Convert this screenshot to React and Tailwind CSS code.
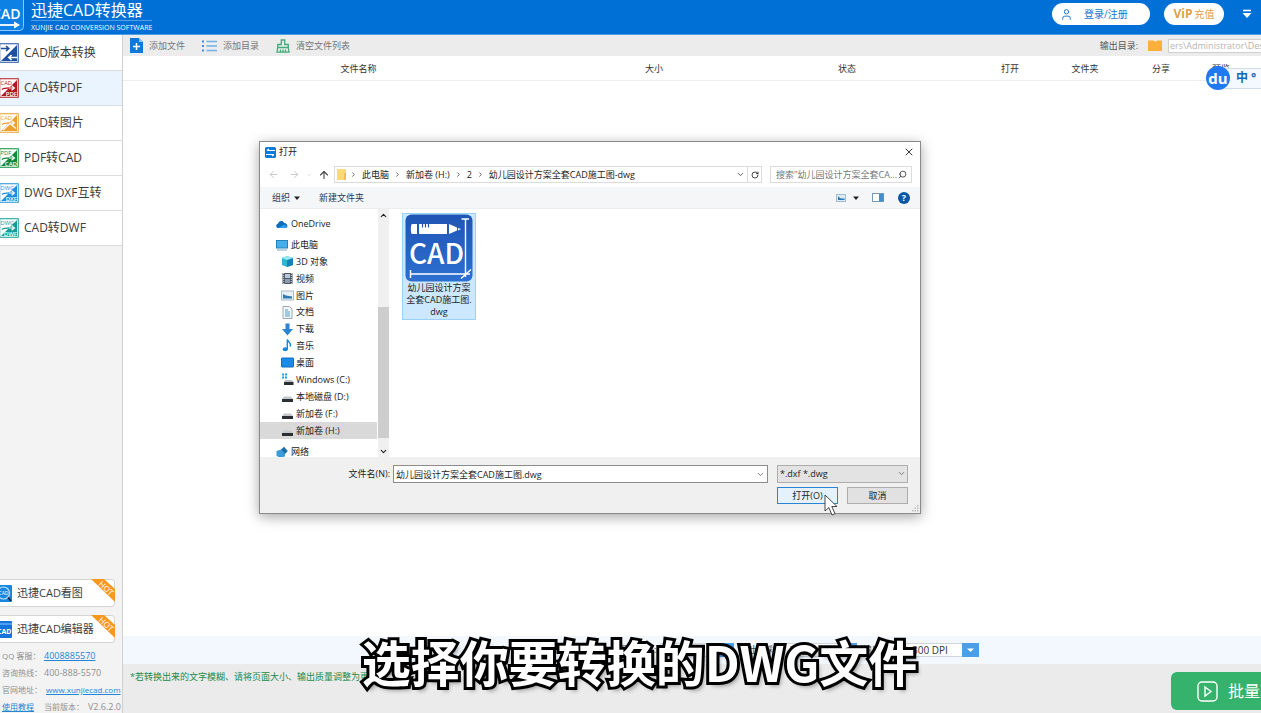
import React from "react";
import { ArrowLeft, ArrowRight, ArrowUp, ChevronDown, ChevronUp, ChevronRight, RotateCw, Search, X, User } from "lucide-react";

const NAV = [
  { label: "CAD版本转换", color: "#1e4f9e", top: "", bottom: "", swap: true },
  { label: "CAD转PDF", color: "#b3161c", top: "CAD", bottom: "PDF", active: true },
  { label: "CAD转图片", color: "#eba02f", top: "CAD", bottom: "" },
  { label: "PDF转CAD", color: "#0f8a3c", top: "PDF", bottom: "CAD" },
  { label: "DWG DXF互转", color: "#1f8fdc", top: "DWG", bottom: "DXF" },
  { label: "CAD转DWF", color: "#159a94", top: "DWG", bottom: "DWF" },
];

function ConvertIcon({ color, top, bottom, swap }) {
  return (
    <svg className="-ml-px h-5 w-5 shrink-0" viewBox="0 0 20 20" aria-hidden="true">
      <rect x="0.75" y="0.75" width="18.5" height="18.5" fill="#fff" stroke={color} strokeWidth="1" />
      <path d="M18 2 V18 H2 Z" fill={color} />
      {swap ? (
        <g fill="none" strokeWidth="1.6">
          <path d="M2 5.5 H9.5 M7 3 L9.8 5.5 L7 8" stroke={color} />
          <path d="M18 14.5 H10 M12.6 12 L9.8 14.5 L12.6 17" stroke="#fff" />
        </g>
      ) : (
        <g>
          <text x="1.5" y="7" fontSize="5.8" fill={color}>{top}</text>
          <path d="M3 11.500 C5 9.600 8 9.800 11.500 9.800" fill="none" stroke={color} strokeWidth="1.3" />
          <path d="M10 10 H15 M12.6 7.600 L15.400 10 L12.6 12.200" fill="none" stroke="#fff" strokeWidth="1.2" />
          {bottom ? (
            <text x="18" y="17.600" textAnchor="end" fontSize="6" fontWeight="600" fill="#fff">{bottom}</text>
          ) : (
            <path d="M4 17 L11 10.5 L17 15.5" fill="none" stroke="#fff" strokeWidth="1.2" />
          )}
        </g>
      )}
    </svg>
  );
}

function HotRibbon() {
  return (
    <svg className="absolute -right-px -top-px h-6 w-6" viewBox="0 0 24 24" aria-hidden="true">
      <path d="M0 0 H13 L24 10 V23 Z" fill="#f8981d" />
      <text x="14.5" y="12" transform="rotate(43 14.5 10)" textAnchor="middle" fontSize="8" fill="#fff">HOT</text>
    </svg>
  );
}

function Sidebar() {
  return (
    <aside className="flex w-[123px] shrink-0 flex-col overflow-hidden border-r border-[#cfcfcf] bg-[#f3f3f3] text-[#3c3c3c]">
      <nav className="bg-white pt-px">
        {NAV.map((n) => (
          <a
            key={n.label}
            href="#"
            className={
              n.active
                ? "flex h-[35px] items-center gap-[5px] border-b border-[#d9dfe6] bg-[#eaf4fe] text-xs whitespace-nowrap"
                : "flex h-[35px] items-center gap-[5px] border-b border-[#dcdcdc] bg-white text-xs whitespace-nowrap"
            }
          >
            <ConvertIcon {...n} />
            {n.label}
          </a>
        ))}
      </nav>
      <div className="mt-auto flex flex-col gap-2 pr-[7px] pb-1">
        <a href="#" className="relative flex h-7 items-center gap-[5px] rounded-r border border-l-0 border-[#d5d5d5] bg-white text-[11px] whitespace-nowrap">
          <svg className="h-[17px] w-3 shrink-0" viewBox="5 0 12 17" aria-hidden="true">
            <rect width="17" height="17" rx="1" fill="#1787e0" />
            <circle cx="8.5" cy="8" r="6" fill="none" stroke="#bfe4ff" strokeWidth="1.2" />
            <text x="8.5" y="10" textAnchor="middle" fontSize="5" fill="#fff">CAD</text>
            <path d="M13 12.5 L16 16" stroke="#123" strokeWidth="1.6" />
          </svg>
          迅捷CAD看图
          <HotRibbon />
        </a>
        <a href="#" className="relative flex h-7 items-center gap-[5px] rounded-r border border-l-0 border-[#d5d5d5] bg-white text-[11px] whitespace-nowrap">
          <svg className="h-[17px] w-3 shrink-0" viewBox="5 0 12 17" aria-hidden="true">
            <rect width="17" height="17" rx="1" fill="#1574dc" />
            <path d="M0 3 H17" stroke="#8ec6ff" strokeWidth="1" />
            <text x="16.500" y="12.6" textAnchor="end" fontSize="7" fontWeight="700" fill="#fff">CAD</text>
          </svg>
          迅捷CAD编辑器
          <HotRibbon />
        </a>
      </div>
      <dl className="-mb-[2px] grid grid-cols-[42px_78px] pl-[2px] text-[9px] leading-[17px] whitespace-nowrap text-[#8f8f8f]">
        <dt className="text-[8px]">QQ 客服：</dt>
        <dd><a href="#" className="text-[#2583d8] underline">4008885570</a></dd>
        <dt className="text-[8px]">咨询热线：</dt>
        <dd>400-888-5570</dd>
        <dt className="text-[8px]">官网地址：</dt>
        <dd className="pl-[2px] text-[8px]"><a href="#" className="text-[#2583d8] underline">www.xunjiecad.com</a></dd>
        <dt className="text-[8px]"><a href="#" className="text-[#2583d8] underline">使用教程</a></dt>
        <dd className="flex justify-between pr-px"><span className="text-[8px]">当前版本：</span>V2.6.2.0</dd>
      </dl>
    </aside>
  );
}

function Header() {
  return (
    <header className="flex h-[35px] shrink-0 items-center justify-between overflow-hidden border-b border-[#4d9fe8] bg-[#0070d6] text-white">
      <div className="flex items-center gap-[7px]">
        <svg className="h-[35px] w-6 shrink-0" viewBox="0 0 24 35" aria-hidden="true">
          <rect x="-12" y="-5" width="35.5" height="35.5" rx="4" fill="#0d82e4" stroke="#8ccbff" strokeWidth="1" />
          <text x="20.500" y="19" textAnchor="end" fontSize="14" fontWeight="600" fill="#fff">CAD</text>
          <path d="M0 25 H15" stroke="#fff" strokeWidth="1.8" />
          <path d="M14 21.5 L20 25 L14 28.5 Z" fill="#fff" />
        </svg>
        <div className="flex flex-col whitespace-nowrap">
          <h1 className="border-b border-[#4f9fe6] text-base leading-5">迅捷CAD转换器</h1>
          <p className="text-[7px] leading-[14px]">XUNJIE CAD CONVERSION SOFTWARE</p>
        </div>
      </div>
      <div className="flex items-center pr-[9px] pb-[6px]">
        <button className="mr-[14px] flex h-[22px] w-[98px] items-center gap-[11px] rounded-full bg-white pl-[8px] text-[10px] text-[#1876d2]">
          <User className="h-[13px] w-[13px]" strokeWidth={1.8} />
          登录/注册
        </button>
        <button className="mr-[18px] flex h-[22px] w-[60px] items-center justify-center gap-[2px] rounded-full bg-white text-[10px] text-[#e0a04a]">
          <span className="text-xs font-bold">ViP</span>充值
        </button>
        <button aria-label="菜单">
          <svg className="h-[10px] w-[10px]" viewBox="0 0 10 10" aria-hidden="true">
            <path d="M1 1.5 H9" stroke="#fff" strokeWidth="1.6" />
            <path d="M0.5 4 H9.5 L5 9 Z" fill="#fff" />
          </svg>
        </button>
      </div>
    </header>
  );
}

function Toolbar() {
  return (
    <div className="flex h-[21px] shrink-0 items-center overflow-hidden bg-[#ececec] pl-[7px] text-[9px] whitespace-nowrap text-[#777]">
      <button className="mr-[17px] flex items-center gap-[6px]">
        <svg className="h-[15px] w-[13px]" viewBox="0 0 13 15" aria-hidden="true">
          <path d="M0 0 H9 L13 4 V15 H0 Z" fill="#0f78d8" />
          <path d="M9 0 V4 H13 Z" fill="#8cc4f5" />
          <path d="M6.5 5 V12 M3 8.5 H10" stroke="#fff" strokeWidth="1.5" />
        </svg>
        添加文件
      </button>
      <button className="mr-[17px] flex items-center gap-[6px]">
        <svg className="h-3 w-[15px]" viewBox="0 0 15 12" aria-hidden="true">
          <path d="M0 1.5 H2 M0 6 H2 M0 10.5 H2" stroke="#3d8edb" strokeWidth="2" />
          <path d="M4.500 1.500 H15 M4.500 6 H15 M4.500 10.500 H15" stroke="#6fb0ea" strokeWidth="1.400" />
        </svg>
        添加目录
      </button>
      <button className="flex items-center gap-[6px]">
        <svg className="h-[14px] w-[14px]" viewBox="0 0 14 14" fill="none" stroke="#44ab7c" strokeWidth="1.3" aria-hidden="true">
          <path d="M5.300 5.500 V1 H8.700 V5.500 H12.300 V8.500 H1.700 V5.500 Z" />
          <path d="M1.700 8.500 L1 13.200 H13 L12.300 8.500 M4.500 13 V10.500 M7 13 V10.500 M9.500 13 V10.500" />
        </svg>
        清空文件列表
      </button>
      <label htmlFor="out" className="ml-auto text-[#555]">输出目录:</label>
      <svg className="mr-[6px] ml-[10px] h-[11px] w-[14px]" viewBox="0 0 14 11" aria-hidden="true">
        <path d="M0 0.500 H6 L7.500 2 L9 0.500 H14 V11 H0 Z" fill="#fbb03b" />
      </svg>
      <input
        id="out"
        readOnly
        defaultValue="ers\Administrator\Desktop"
        className="h-[14px] w-[93px] border border-r-0 border-[#cfcfcf] bg-white pl-px text-[9px] text-[#b5b5b5]"
      />
    </div>
  );
}

function FileTable() {
  return (
    <div className="min-h-0 flex-1 bg-white pr-[11px]">
      <table className="w-full table-fixed border-b border-[#eee] text-[9px] text-[#333]">
        <thead>
          <tr className="h-6">
            <th className="pt-[2px] font-normal">文件名称</th>
            <th className="w-[120px] pt-[2px] font-normal">大小</th>
            <th className="w-[266px] pt-[2px] font-normal">状态</th>
            <th className="w-[60px] pt-[2px] font-normal">打开</th>
            <th className="w-[90px] pt-[2px] font-normal">文件夹</th>
            <th className="w-[62px] pt-[2px] font-normal">分享</th>
            <th className="w-[58px] pt-[2px] font-normal">预览</th>
          </tr>
        </thead>
      </table>
    </div>
  );
}

function Option({ label, value, id }) {
  return (
    <div className="flex items-center gap-1">
      <label htmlFor={id}>{label}</label>
      <span className="relative flex">
        <select id={id} className="h-[14px] w-[74px] appearance-none border border-[#cfd8e2] bg-white px-[6px] text-[10px] leading-3 text-[#333]">
          <option>{value}</option>
        </select>
        <svg className="pointer-events-none absolute right-0 top-0 h-[14px] w-[17px]" viewBox="0 0 17 14" aria-hidden="true">
          <rect width="17" height="14" fill="#4a9fe8" />
          <path d="M5 5.500 H12 L8.500 9 Z" fill="#fff" />
        </svg>
      </span>
    </div>
  );
}

const DRIVES = {
  cube: (
    <>
      <path d="M1 3 L6 1 L12 3 V10 L6 12 L1 10 Z" fill="#2fb4d6" />
      <path d="M6 5 L12 3 V10 L6 12 Z" fill="#1583b8" />
      <path d="M1 3 L6 1 L12 3 L6 5 Z" fill="#9be6f2" />
    </>
  ),
  video: (
    <>
      <rect x="1.500" y="1" width="10" height="11" fill="#4b5563" />
      <rect x="4" y="2" width="5" height="4" fill="#b8c7d6" />
      <rect x="4" y="7" width="5" height="4" fill="#8b9bb0" />
      <path d="M2.700 1 V12 M10.300 1 V12" stroke="#cbd5e1" strokeDasharray="1 1" />
    </>
  ),
  image: (
    <>
      <rect x="0.500" y="2" width="12" height="9" fill="#e8f1f8" stroke="#a9b9c6" />
      <path d="M2 9.500 V5 L5 6.500 L11 7.500 V9.500 Z" fill="#2f79b5" />
    </>
  ),
  doc: (
    <>
      <path d="M2 0.500 H8.500 L11 3 V12.500 H2 Z" fill="#f4f8fb" stroke="#9aa9b5" />
      <path d="M4 4 H7 M4 6 H9 M4 8 H9 M4 10 H9" stroke="#4b9ccb" />
    </>
  ),
  down: <path d="M4.500 0.500 H8.500 V6 H12 L6.500 12.500 L1 6 H4.500 Z" fill="#2a84d2" />,
  music: (
    <>
      <ellipse cx="4.300" cy="10.300" rx="2.600" ry="2" fill="#1487dc" />
      <path d="M6.300 10 V0.500 C7 3.500 10.500 3.500 9.300 7.500" fill="none" stroke="#1487dc" strokeWidth="1.400" />
    </>
  ),
  desk: <rect x="0.500" y="2" width="12" height="9" rx="0.500" fill="#1a8ae6" stroke="#0e6fc2" />,
  win: (
    <>
      <path d="M1 1.500 H3 M4 1.500 H6 M1 4.500 H3 M4 4.500 H6" stroke="#1aa0d8" strokeWidth="2" />
      <path d="M3 9 L4.500 7 H11 L12.500 9 Z" fill="#b9bfc4" />
      <rect x="3" y="9" width="9.500" height="3" fill="#2b2f33" />
    </>
  ),
  drive: (
    <>
      <path d="M1 9 L3 6.500 H10 L12 9 Z" fill="#c3c8cc" />
      <rect x="1" y="9" width="11" height="3" fill="#2b2f33" />
    </>
  ),
};

const TREE = [
  ["3D 对象", "cube"],
  ["视频", "video"],
  ["图片", "image"],
  ["文档", "doc"],
  ["下载", "down"],
  ["音乐", "music"],
  ["桌面", "desk"],
  ["Windows (C:)", "win"],
  ["本地磁盘 (D:)", "drive"],
  ["新加卷 (F:)", "drive"],
  ["新加卷 (H:)", "drive"],
];

function Tree() {
  return (
    <div className="flex w-[129px] shrink-0">
      <div className="flex min-w-0 flex-1 flex-col overflow-hidden pt-[6px] whitespace-nowrap">
        <div className="flex h-[17px] shrink-0 items-center gap-[3px] pl-4">
          <svg className="h-3 w-3" viewBox="0 0 12 12" aria-hidden="true">
            <path d="M2.500 10 C-0.500 10 -0.300 6 2 5.800 C2.500 2.500 7 1.800 8.300 5 C11 4.800 12.800 9 10 10 Z" fill="#0f6cbd" />
            <path d="M2.500 10 L8 6.500 L11.300 8.500 C11 9.600 10.600 10 10 10 Z" fill="#2a9df0" />
          </svg>
          OneDrive
        </div>
        <div className="mt-1 flex h-[17px] shrink-0 items-center gap-[3px] pl-4">
          <svg className="h-3 w-3" viewBox="0 0 12 12" aria-hidden="true">
            <rect x="0.500" y="1.500" width="11" height="7.500" fill="#46aeea" stroke="#2383bd" />
            <path d="M1 11 H11" stroke="#8fb6cf" strokeWidth="1.200" />
          </svg>
          此电脑
        </div>
        <ul className="flex h-[186px] shrink-0 flex-col">
          {TREE.map(([name, icon]) => (
            <li
              key={name}
              className={
                name === "新加卷 (H:)"
                  ? "flex flex-1 items-center gap-[2px] bg-[#d9d9d9] pl-[21px]"
                  : "flex flex-1 items-center gap-[2px] pl-[21px]"
              }
            >
              <svg className="h-[13px] w-[13px]" viewBox="0 0 13 13" aria-hidden="true">{DRIVES[icon]}</svg>
              {name}
            </li>
          ))}
        </ul>
        <div className="mt-1 flex h-[17px] shrink-0 items-center gap-[3px] pl-4">
          <svg className="h-3 w-3" viewBox="0 0 12 12" aria-hidden="true">
            <path d="M0.500 5 L5 3.500 L9 5 V10.500 L4 11.500 L0.500 10 Z" fill="#3c9bd6" />
            <path d="M5 3.500 L8 0.800 L11.800 5 L9 8 Z" fill="#1d6fa8" />
          </svg>
          网络
        </div>
      </div>
      <div className="ml-px flex w-[11px] flex-col items-center bg-[#f0f0f0]">
        <ChevronUp className="mt-[2px] h-[9px] w-[9px] shrink-0" strokeWidth={3} />
        <div className="mt-[87px] w-full flex-1 bg-[#cdcdcd]" />
        <ChevronDown className="mt-[9px] mb-px h-[9px] w-[9px] shrink-0" strokeWidth={3} />
      </div>
    </div>
  );
}

function CadFile() {
  return (
    <button className="flex w-[74px] flex-col items-center self-start border border-[#99d1ff] bg-[#cce8ff] pb-px text-center text-[9px] leading-3">
      <svg className="h-[68px] w-[68px]" viewBox="0 0 68 68" aria-hidden="true">
        <defs>
          <linearGradient id="cad" x1="0" y1="0" x2="0" y2="1">
            <stop offset="0" stopColor="#1f55b5" />
            <stop offset="1" stopColor="#2d6fd0" />
          </linearGradient>
        </defs>
        <rect x="0.500" y="0.500" width="67" height="67" rx="6" fill="url(#cad)" />
        <path d="M7 10 H12 V20 H7 C5.500 20 5.500 10 7 10 Z M14 10 H42 V20 H14 Z M44 10 L52 13.500 V16.500 L44 20 Z M53 14 L56 15 L53 16.500 Z" fill="#fff" />
        <path d="M17.500 10 V13.500 M20.500 10 V13.500 M23.500 10 V13.500" stroke="#1f55b5" strokeWidth="1.200" />
        <text x="4" y="50" fontSize="28" fontWeight="500" fill="#fff" className="font-['Noto_Sans_CJK_SC',sans-serif]">CAD</text>
        <g stroke="#fff" strokeWidth="1.400" fill="none">
          <path d="M60.500 5 V63 M56.500 5 H64 M5 60 H65 M5.500 56 V64 M56 64.500 L66 55.500" />
        </g>
      </svg>
      <span>幼儿园设计方案<br />全套CAD施工图.<br />dwg</span>
    </button>
  );
}

function OpenDialog() {
  const crumbs = ["此电脑", "新加卷 (H:)", "2", "幼儿园设计方案全套CAD施工图-dwg"];
  return (
    <section
      role="dialog"
      aria-label="打开"
      className="absolute top-[141px] left-[259px] flex w-[662px] flex-col border border-[#8a8a8a] bg-white text-[9px] text-[#222] shadow-[0_3px_12px_rgba(0,0,0,0.35)]"
    >
      <div className="flex h-5 items-center pr-[5px] pl-[5px]">
        <svg className="mr-[3px] h-[11px] w-[11px]" viewBox="0 0 11 11" aria-hidden="true">
          <rect width="11" height="11" rx="1.500" fill="#0c7bd8" />
          <path d="M10 3.500 H2 M4 1.800 L2 3.500 M1 7.500 H9 M7 9.200 L9 7.500" stroke="#fff" strokeWidth="1.100" fill="none" />
        </svg>
        <h2>打开</h2>
        <button aria-label="关闭" className="ml-auto"><X className="h-3 w-3" strokeWidth={1.8} /></button>
      </div>
      <div className="flex h-[25px] items-center pr-2 pl-2">
        <button aria-label="后退" className="mr-[10px] text-[#c4c4c4]"><ArrowLeft className="h-[11px] w-[11px]" /></button>
        <button aria-label="前进" className="mr-[6px] text-[#c4c4c4]"><ArrowRight className="h-[11px] w-[11px]" /></button>
        <ChevronDown className="mr-[6px] h-[6px] w-[6px] text-[#c4c4c4]" />
        <button aria-label="上移" className="mr-[4px] text-[#444]"><ArrowUp className="h-3 w-3" strokeWidth={2.2} /></button>
        <div className="flex h-[17px] min-w-0 flex-1 items-center border border-[#dcdcdc] whitespace-nowrap">
          <svg className="mr-[4px] ml-[2px] h-[11px] w-[9px]" viewBox="0 0 9 11" aria-hidden="true">
            <rect width="9" height="11" rx="0.500" fill="#f9d978" />
            <path d="M7 4 H9 V11 H7 Z" fill="#eec04f" />
          </svg>
          {crumbs.map((c) => (
            <React.Fragment key={c}>
              <ChevronRight className="mr-[5px] h-[7px] w-[7px] text-[#555]" strokeWidth={3} />
              <span className="mr-[5px] leading-[13px]">{c}</span>
            </React.Fragment>
          ))}
          <ChevronDown className="mr-[2px] ml-auto h-[9px] w-[9px] text-[#555]" strokeWidth={2.5} />
          <button aria-label="刷新" className="flex h-full w-[14px] items-center justify-center border-l border-[#dcdcdc]">
            <RotateCw className="h-[8px] w-[8px]" strokeWidth={2.5} />
          </button>
        </div>
        <label className="ml-2 flex h-[17px] w-[142px] items-center border border-[#dcdcdc] pr-[4px] pl-[5px]">
          <input aria-label="搜索" placeholder='搜索"幼儿园设计方案全套CA...' className="min-w-0 flex-1 placeholder:text-[#777]" />
          <Search className="h-[9px] w-[9px] shrink-0 -scale-x-100 text-[#444]" strokeWidth={2.4} />
        </label>
      </div>
      <div className="flex h-[22px] items-center border-b border-[#ebedf0] bg-[#f5f6f7] pr-[10px] pl-3 text-[#1e395b]">
        <button className="mr-[19px] flex items-center gap-1">
          组织
          <svg className="h-1 w-[6px]" viewBox="0 0 6 4" aria-hidden="true"><path d="M0 0.500 H6 L3 4 Z" fill="#222" /></svg>
        </button>
        <button>新建文件夹</button>
        <button aria-label="视图" className="mr-[13px] ml-auto flex items-center gap-[7px]">
          <svg className="h-2 w-[10px]" viewBox="0 0 10 8" aria-hidden="true">
            <rect x="0.500" y="0.500" width="9" height="7" fill="#d9ebf7" stroke="#a4bccd" />
            <path d="M2 6 V2.500 L5 4.500 H8.500 V6 Z" fill="#2f79b5" />
          </svg>
          <svg className="h-1 w-[6px]" viewBox="0 0 6 4" aria-hidden="true"><path d="M0 0.500 H6 L3 4 Z" fill="#222" /></svg>
        </button>
        <button aria-label="预览窗格" className="mr-[14px]">
          <svg className="block h-[9px] w-3" viewBox="0 0 12 9" aria-hidden="true">
            <rect x="0.500" y="0.500" width="11" height="8" fill="#fff" stroke="#7b98b0" />
            <rect x="7" y="1" width="4.500" height="7.500" fill="#3d8fd0" />
          </svg>
        </button>
        <button aria-label="帮助" className="flex h-3 w-3 items-center justify-center rounded-full bg-[#0a57a8] text-[9px] leading-3 font-bold text-white">?</button>
      </div>
      <div className="flex h-[248px]">
        <Tree />
        <div className="flex flex-1 pt-[4px] pl-[13px]">
          <CadFile />
        </div>
      </div>
      <form className="grid grid-cols-[1fr_375px_131px] items-center gap-x-[9px] gap-y-1 bg-[#f0f0f0] pt-2 pr-3 pb-[9px]" onSubmit={(e) => e.preventDefault()}>
        <label htmlFor="fname" className="-mr-[6px] text-right">文件名(N):</label>
        <span className="flex h-[18px] items-center border border-[#8c8c8c] bg-white pr-[2px]">
          <input id="fname" defaultValue="幼儿园设计方案全套CAD施工图.dwg" className="h-full min-w-0 flex-1 px-[2px]" />
          <ChevronDown className="h-[9px] w-[9px] text-[#555]" />
        </span>
        <span className="relative flex">
          <select aria-label="文件类型" className="h-[18px] w-full appearance-none border border-[#adadad] bg-[#e3e3e3] px-[2px] leading-4">
            <option>*.dxf *.dwg</option>
          </select>
          <ChevronDown className="pointer-events-none absolute top-1 right-[2px] h-[9px] w-[9px] text-[#555]" />
        </span>
        <div className="col-start-3 grid grid-cols-2 gap-[9px]">
          <button className="h-[17px] border border-[#2b84d3] bg-[#e5f1fb]">打开(O)</button>
          <button className="h-[17px] border border-[#adadad] bg-[#e1e1e1]">取消</button>
        </div>
      </form>
      <svg className="absolute right-px bottom-px h-[7px] w-[7px]" viewBox="0 0 7 7" fill="#bdbdbd" aria-hidden="true">
        <path d="M5 0 H6.500 V1.500 H5 Z M5 2.500 H6.500 V4 H5 Z M5 5 H6.500 V6.500 H5 Z M2.500 2.500 H4 V4 H2.500 Z M2.500 5 H4 V6.500 H2.500 Z M0 5 H1.500 V6.500 H0 Z" />
      </svg>
      <svg className="pointer-events-none absolute top-[352px] left-[564px] h-[23px] w-[15px]" viewBox="0 0 15 23" aria-hidden="true">
        <path d="M1 1 V17 L4.800 13.500 L8 21 L11 19.700 L7.800 12.500 H13 Z" fill="#fff" stroke="#333" strokeWidth="0.900" />
      </svg>
    </section>
  );
}

export default function App() {
  return (
    <div className="relative flex h-screen flex-col overflow-hidden bg-white font-['Open_Sans','Noto_Sans_CJK_SC',sans-serif]">
      <Header />
      <div className="flex min-h-0 flex-1">
        <Sidebar />
        <main className="flex min-w-0 flex-1 flex-col">
          <Toolbar />
          <FileTable />
          <div className="flex h-7 shrink-0 items-center justify-end gap-[6px] bg-[#f3f8fe] pr-[282px] text-[9px] text-[#444]">
            <Option id="size" label="页面大小:" value="A4" />
            <Option id="color" label="输出色彩:" value="彩色" />
            <Option id="quality" label="输出质量:" value="300 DPI" />
          </div>
          <footer className="flex h-[49px] shrink-0 justify-between overflow-hidden bg-[#ebebeb] pl-[7px]">
            <p className="pt-[6px] text-[9px] leading-[14px] whitespace-nowrap text-[#1b8a4b]">*若转换出来的文字模糊、请将页面大小、输出质量调整为更大</p>
            <button className="mt-2 -mr-[50px] flex h-[38px] w-[140px] shrink-0 items-center gap-[10px] rounded-md bg-[#35b26b] pl-[26px] text-base whitespace-nowrap text-white">
              <svg className="h-[21px] w-[21px] shrink-0" viewBox="0 0 21 21" fill="none" stroke="#fff" strokeWidth="1.400" aria-hidden="true">
                <rect x="1" y="1" width="19" height="19" rx="4" />
                <path d="M8 6 L14 10.500 L8 15 Z" />
              </svg>
              批量转换
            </button>
          </footer>
        </main>
      </div>

      <OpenDialog />

      <div className="absolute top-[66px] right-0 flex items-center">
        <span className="z-10 -mr-3 flex h-6 w-6 items-center justify-center rounded-full bg-[#2079f0] text-[15px] leading-6 font-bold text-white">du</span>
        <span className="flex h-[21px] w-[43px] items-center gap-[3px] border-y border-[#cfdcea] bg-[#f4f9ff] pl-[18px] text-xs font-bold text-[#1767b8]">中<span>°</span></span>
      </div>

      <p className="absolute inset-x-0 bottom-[22px] pl-[18px] text-center font-['Noto_Sans_CJK_SC',sans-serif] text-[49px] leading-[60px] font-bold whitespace-nowrap text-white [-webkit-text-stroke:6px_black] [paint-order:stroke_fill] [text-shadow:3px_4px_4px_rgba(0,0,0,0.35)]">
        选择你要转换的DWG文件
      </p>
    </div>
  );
}
